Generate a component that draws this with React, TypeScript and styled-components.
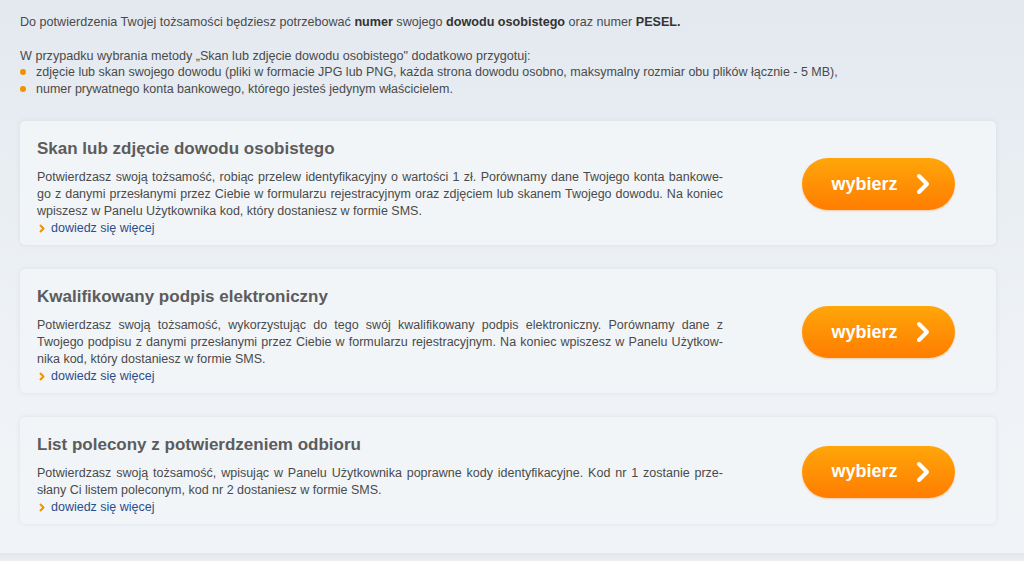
import styled, { createGlobalStyle } from "styled-components";

const GlobalStyle = createGlobalStyle`
  html, body {
    margin: 0;
    padding: 0;
  }
  body {
    font-family: "Liberation Sans", Arial, sans-serif;
    background: linear-gradient(180deg, #e3e9ef 0%, #eef2f6 60%, #f1f4f7 100%);
    min-height: 561px;
    overflow: hidden;
  }
`;

const Page = styled.div`
  height: 553px;
  padding: 14px 28px 0 20px;
  box-sizing: border-box;
`;

const Intro = styled.p<{ $tight?: boolean }>`
  margin: 0 0 ${(p) => (p.$tight ? "0" : "17px")} 0;
  font-size: 12.6px;
  line-height: 16.5px;
  color: #4a4a4a;

  b {
    color: #333;
  }
`;

const Bullets = styled.ul`
  margin: 0;
  padding: 0;
  list-style: none;
`;

const Bullet = styled.li`
  display: flex;
  align-items: center;
  gap: 10px;
  font-size: 12.5px;
  line-height: 16.5px;
  color: #4a4a4a;

  &::before {
    content: "";
    width: 6px;
    height: 6px;
    border-radius: 50%;
    background: #f39200;
  }
`;

const Cards = styled.div`
  margin-top: 24px;
  display: flex;
  flex-direction: column;
  gap: 24px;
`;

const Card = styled.section`
  display: flex;
  align-items: center;
  justify-content: space-between;
  padding: 17px 41px 8px 17px;
  background: #f1f5f8;
  border-radius: 5px;
  box-shadow: 0 0 4px rgba(160, 175, 190, 0.25);
`;

const Content = styled.div`
  width: 686px;
`;

const Title = styled.h2`
  margin: 0 0 9px 0;
  font-size: 17px;
  line-height: 22px;
  font-weight: bold;
  color: #5c5c5c;
`;

const Line = styled.span<{ $last?: boolean }>`
  display: block;
  font-size: 12.5px;
  line-height: 17px;
  color: #4a4a4a;
  text-align: ${(p) => (p.$last ? "left" : "justify")};
  text-align-last: ${(p) => (p.$last ? "left" : "justify")};
`;

const More = styled.a`
  display: flex;
  align-items: center;
  gap: 6px;
  font-size: 12.5px;
  line-height: 17px;
  color: #2b4d8c;
  text-decoration: none;
  margin-left: 2px;
`;

const Button = styled.button`
  width: 153px;
  height: 52px;
  border: none;
  border-radius: 26px;
  background: linear-gradient(180deg, #ffa60a 0%, #ff8f05 55%, #ff7d00 100%);
  box-shadow: 0 1px 2px rgba(220, 110, 0, 0.3);
  color: #fff;
  font-family: "Liberation Sans", Arial, sans-serif;
  font-weight: bold;
  font-size: 18px;
  display: flex;
  align-items: center;
  justify-content: center;
  gap: 18px;
  padding: 0 0 0 4px;
  margin-top: -7px;
  cursor: pointer;
`;

const Footer = styled.div`
  height: 8px;
  background: linear-gradient(180deg, #e2e6ea, #eceff2);
`;

const Chevron = () => (
  <svg width="14" height="22" viewBox="0 0 14 22">
    <polyline
      points="3,3 11,11 3,19"
      fill="none"
      stroke="#fff"
      strokeWidth="4"
      strokeLinecap="round"
      strokeLinejoin="round"
    />
  </svg>
);

const SmallChevron = () => (
  <svg width="6" height="9" viewBox="0 0 6 9">
    <polyline
      points="1,1 4.5,4.5 1,8"
      fill="none"
      stroke="#f39200"
      strokeWidth="2"
      strokeLinejoin="round"
    />
  </svg>
);

const methods = [
  {
    title: "Skan lub zdjęcie dowodu osobistego",
    lines: [
      "Potwierdzasz swoją tożsamość, robiąc przelew identyfikacyjny o wartości 1 zł. Porównamy dane Twojego konta bankowe-",
      "go z danymi przesłanymi przez Ciebie w formularzu rejestracyjnym oraz zdjęciem lub skanem Twojego dowodu. Na koniec",
      "wpiszesz w Panelu Użytkownika kod, który dostaniesz w formie SMS.",
    ],
  },
  {
    title: "Kwalifikowany podpis elektroniczny",
    lines: [
      "Potwierdzasz swoją tożsamość, wykorzystując do tego swój kwalifikowany podpis elektroniczny. Porównamy dane z",
      "Twojego podpisu z danymi przesłanymi przez Ciebie w formularzu rejestracyjnym. Na koniec wpiszesz w Panelu Użytkow-",
      "nika kod, który dostaniesz w formie SMS.",
    ],
  },
  {
    title: "List polecony z potwierdzeniem odbioru",
    lines: [
      "Potwierdzasz swoją tożsamość, wpisując w Panelu Użytkownika poprawne kody identyfikacyjne. Kod nr 1 zostanie prze-",
      "słany Ci listem poleconym, kod nr 2 dostaniesz w formie SMS.",
    ],
  },
];

export default function App() {
  return (
    <>
      <GlobalStyle />
      <Page>
        <Intro>
          Do potwierdzenia Twojej tożsamości będziesz potrzebować <b>numer</b> swojego{" "}
          <b>dowodu osobistego</b> oraz numer <b>PESEL.</b>
        </Intro>
        <Intro $tight>
          W przypadku wybrania metody „Skan lub zdjęcie dowodu osobistego" dodatkowo przygotuj:
        </Intro>
        <Bullets>
          <Bullet>
            zdjęcie lub skan swojego dowodu (pliki w formacie JPG lub PNG, każda strona dowodu osobno,
            maksymalny rozmiar obu plików łącznie - 5 MB),
          </Bullet>
          <Bullet>numer prywatnego konta bankowego, którego jesteś jedynym właścicielem.</Bullet>
        </Bullets>
        <Cards>
          {methods.map((m) => (
            <Card key={m.title}>
              <Content>
                <Title>{m.title}</Title>
                {m.lines.map((l, i) => (
                  <Line key={i} $last={i === m.lines.length - 1}>
                    {l}
                  </Line>
                ))}
                <More href="#">
                  <SmallChevron />
                  dowiedz się więcej
                </More>
              </Content>
              <Button>
                wybierz
                <Chevron />
              </Button>
            </Card>
          ))}
        </Cards>
      </Page>
      <Footer />
    </>
  );
}
